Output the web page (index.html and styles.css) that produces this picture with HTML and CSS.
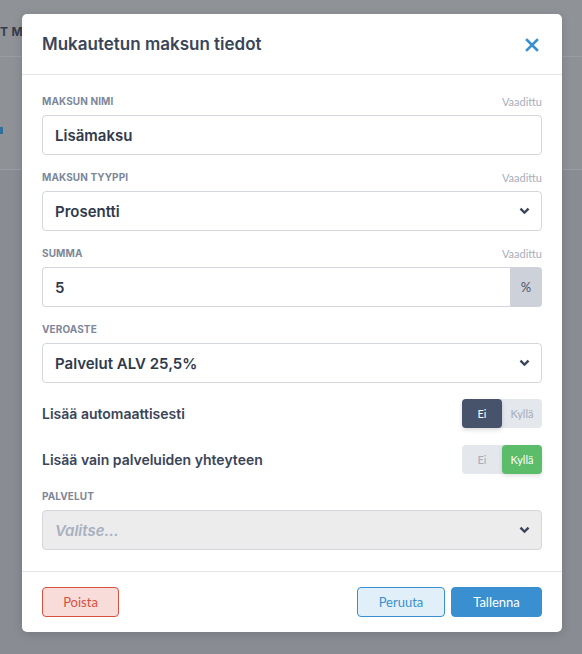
FILE: index.html
```html
<!DOCTYPE html>
<html lang="fi">
<head>
<meta charset="utf-8">
<link rel="stylesheet" href="styles.css">
</head>
<body>
<div class="page">
  <div class="page-top"></div>
  <div class="page-head"><span class="page-title">T M</span></div>
  <div class="page-row"><span class="page-mark"></span></div>
  <div class="page-rest"></div>
</div>
<div class="overlay">
  <div class="modal">
    <div class="modal-header">
      <h2 class="modal-title">Mukautetun maksun tiedot</h2>
      <svg class="close" width="14" height="14" viewBox="0 0 14 14"><path d="M2 2 L12 12 M12 2 L2 12" stroke="#3a8fd0" stroke-width="2.6" stroke-linecap="square"/></svg>
    </div>
    <div class="modal-body">
      <div class="field">
        <div class="label-row"><span class="label">Maksun nimi</span><span class="req">Vaadittu</span></div>
        <div class="input">Lisämaksu</div>
      </div>
      <div class="field">
        <div class="label-row"><span class="label">Maksun tyyppi</span><span class="req">Vaadittu</span></div>
        <div class="input select">Prosentti<svg class="chev" width="11" height="8" viewBox="0 0 11 8"><path d="M0.6 2.4 L2.3 0.7 L5.5 3.9 L8.7 0.7 L10.4 2.4 L5.5 7.3 Z" fill="#3a4559"/></svg></div>
      </div>
      <div class="field">
        <div class="label-row"><span class="label">Summa</span><span class="req">Vaadittu</span></div>
        <div class="input-group"><div class="input grow">5</div><div class="addon">%</div></div>
      </div>
      <div class="field">
        <div class="label-row"><span class="label">Veroaste</span></div>
        <div class="input select">Palvelut ALV 25,5%<svg class="chev" width="11" height="8" viewBox="0 0 11 8"><path d="M0.6 2.4 L2.3 0.7 L5.5 3.9 L8.7 0.7 L10.4 2.4 L5.5 7.3 Z" fill="#3a4559"/></svg></div>
      </div>
      <div class="toggle-row first">
        <span class="toggle-label">Lisää automaattisesti</span>
        <div class="toggle"><span class="opt on-dark">Ei</span><span class="opt">Kyllä</span></div>
      </div>
      <div class="toggle-row">
        <span class="toggle-label">Lisää vain palveluiden yhteyteen</span>
        <div class="toggle"><span class="opt">Ei</span><span class="opt on-green">Kyllä</span></div>
      </div>
      <div class="field last">
        <div class="label-row"><span class="label">Palvelut</span></div>
        <div class="input select disabled"><span class="placeholder">Valitse...</span><svg class="chev" width="11" height="8" viewBox="0 0 11 8"><path d="M0.6 2.4 L2.3 0.7 L5.5 3.9 L8.7 0.7 L10.4 2.4 L5.5 7.3 Z" fill="#3a4559"/></svg></div>
      </div>
    </div>
    <div class="modal-footer">
      <button class="btn btn-danger">Poista</button>
      <div class="spacer"></div>
      <button class="btn btn-light">Peruuta</button>
      <button class="btn btn-primary">Tallenna</button>
    </div>
  </div>
</div>
</body>
</html>
```
FILE: styles.css
```css
* { box-sizing: border-box; }
html, body { margin: 0; padding: 0; }
body {
  width: 582px;
  height: 654px;
  overflow: hidden;
  background: #898c93;
  font-family: Inter, "Liberation Sans", sans-serif;
  position: relative;
}
.page { width: 100%; }
.page-top { height: 14px; background: #8f9297; }
.page-head {
  height: 43px;
  background: #8f9297;
  border-bottom: 1px solid #9a9da2;
  display: flex;
  align-items: flex-start;
  padding-top: 10px;
}
.page-title {
  margin-left: 0;
  font-size: 12px;
  font-weight: 700;
  color: #353c4b;
  letter-spacing: 0.3px;
  white-space: nowrap;
}
.page-row {
  height: 113px;
  background: #8e9196;
  border-bottom: 1px solid #9a9da2;
  position: relative;
}
.page-mark {
  position: absolute;
  left: 0;
  top: 70px;
  width: 3px;
  height: 7px;
  background: #2f6f9c;
}
.page-rest { height: 440px; background: #898c93; }

.overlay {
  position: absolute;
  inset: 0;
  padding: 14px 0 0 22px;
  display: flex;
  justify-content: flex-start;
  align-items: flex-start;
}
.modal {
  width: 540px;
  background: #fff;
  border-radius: 5px;
  box-shadow: 0 2px 10px rgba(0,0,0,0.15);
}
.modal-header {
  height: 61px;
  border-bottom: 1px solid #e3e5ea;
  display: flex;
  align-items: center;
  justify-content: space-between;
  padding: 0 23px 0 20px;
}
.modal-title {
  margin: 0 0 1px;
  font-size: 17px;
  font-weight: 600;
  color: #3a4559;
}
.close { display: block; margin-top: 1px; }

.modal-body { padding: 19px 20px 21px; }
.field { margin-bottom: 15px; }
.field.last { margin-bottom: 0; }
.label-row {
  height: 14px;
  display: flex;
  align-items: center;
  justify-content: space-between;
  margin-bottom: 7px;
}
.label {
  font-size: 10px;
  font-weight: 700;
  text-transform: uppercase;
  color: #7e879a;
  letter-spacing: 0.1px;
}
.req {
  font-family: Lato, "Liberation Sans", sans-serif;
  font-size: 11px;
  color: #a8aebb;
}
.input {
  height: 40px;
  border: 1px solid #d3d6dd;
  border-radius: 4px;
  padding: 0 12px;
  display: flex;
  align-items: center;
  font-size: 15px;
  font-weight: 600;
  color: #2f3a4d;
}
.select { justify-content: space-between; padding-right: 11px; }
.chev { display: block; }
.input-group { display: flex; height: 40px; }
.input.grow {
  flex: 1;
  border-radius: 4px 0 0 4px;
  border-right: none;
}
.addon {
  width: 32px;
  background: #cdd1da;
  border-radius: 0 4px 4px 0;
  display: flex;
  align-items: center;
  justify-content: center;
  font-family: Lato, "Liberation Sans", sans-serif;
  font-size: 13px;
  color: #4b5467;
}
.disabled { background: #ececed; border-color: #d3d6dd; }
.placeholder { font-style: italic; color: #a9b0bf; font-weight: 600; }

.toggle-row {
  height: 29px;
  display: flex;
  align-items: center;
  justify-content: space-between;
  margin-bottom: 17px;
}
.toggle-row.first { margin-top: 16px; }
.toggle-row + .field { margin-top: -2px; }
.toggle-label {
  font-size: 14px;
  font-weight: 600;
  color: #3a4559;
}
.toggle {
  display: flex;
  width: 80px;
  height: 29px;
  background: #e4e7ec;
  border-radius: 4px;
}
.opt {
  flex: 1;
  display: flex;
  align-items: center;
  justify-content: center;
  font-family: Lato, "Liberation Sans", sans-serif;
  font-size: 11px;
  color: #a5acba;
  border-radius: 4px;
}
.on-dark { background: #46536a; color: #fff; box-shadow: 0 2px 4px rgba(0,0,0,0.15); }
.on-green { background: #5bbd6a; color: #fff; box-shadow: 0 2px 4px rgba(0,0,0,0.12); }

.modal-footer {
  border-top: 1px solid #e3e5ea;
  display: flex;
  align-items: center;
  padding: 15px 20px 15px;
  gap: 6px;
}
.spacer { flex: 1; }
.btn {
  height: 30px;
  border-radius: 4px;
  font-family: Lato, "Liberation Sans", sans-serif;
  font-size: 13px;
  border: 1px solid transparent;
  padding: 0;
  cursor: pointer;
}
.btn-danger { width: 77px; background: #f7dcd9; border-color: #d9503f; color: #d9503f; }
.btn-light { width: 88px; background: #e1f0f8; border-color: #3a8fd0; color: #3a8fd0; }
.btn-primary { width: 91px; background: #3a8fd0; border-color: #3a8fd0; color: #fff; }
```
